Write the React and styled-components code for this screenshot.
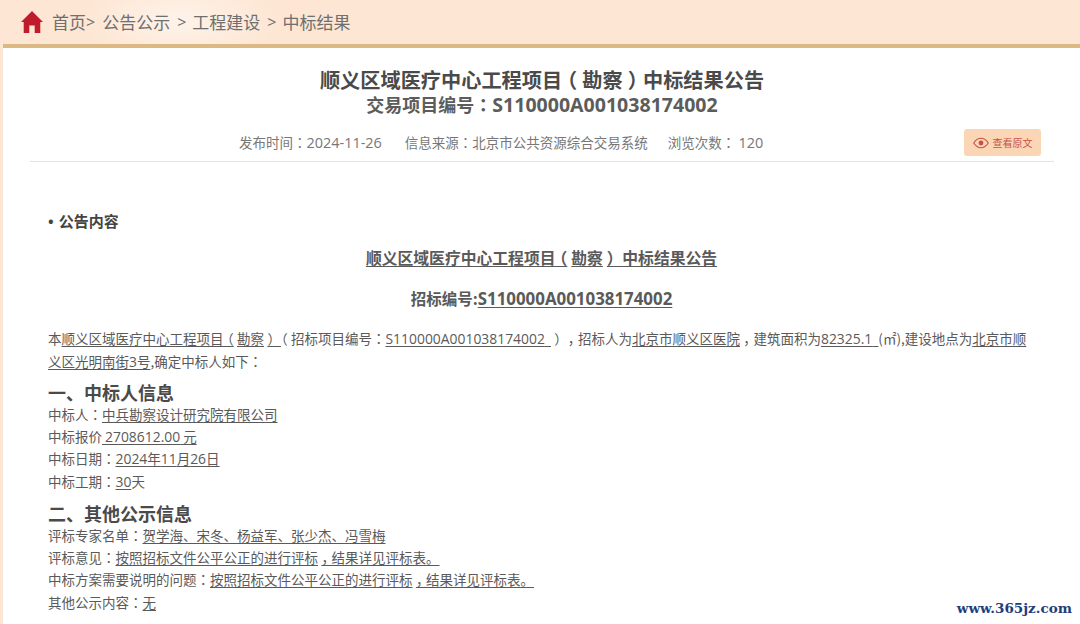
import React from 'react';
import styled, { createGlobalStyle } from 'styled-components';

const Global = createGlobalStyle`
  html, body { margin: 0; padding: 0; background: #fff; overflow: hidden; }
  body {
    font-family: "Noto Sans CJK SC", "Open Sans", sans-serif;
    color: #555;
    text-spacing-trim: space-all;
  }
`;
const Page = styled.div`
  position: relative;
  width: 1080px;
  height: 624px;
  overflow: hidden;
  background: #fde6d3;
`;
const Crumbs = styled.div`
  height: 43px;
  padding-bottom: 1px;
  display: flex;
  align-items: center;
  padding-left: 21px;
  font-size: 17px;
  color: #6f6f6f;
  white-space: pre;
  background: radial-gradient(ellipse 100px 44px at 180px 20px, #fef3ea 0%, #fde6d3 100%);
`;
const HomeWrap = styled.span`
  display: flex;
  margin: 1px 9px 0 0;
`;
const Crumb = styled.span`
  margin-right: ${p => p.$gap || 0}px;
`;
const Sep = styled.span`
  font-family: "Open Sans", sans-serif;
  font-size: 16px;
  margin-right: ${p => p.$gap || 0}px;
`;
const Sheet = styled.div`
  margin-left: 3px;
  height: 576px;
  background: #fff;
  border-top: 4px solid #dcb883;
`;
const Article = styled.div`
  padding: 0 26px 0 27px;
`;
const TitleBlock = styled.div`
  padding-top: 18px;
  text-align: center;
  --lat: 1.087em;
`;
const Title = styled.h1`
  margin: 0;
  font-size: 20.2px;
  line-height: 27px;
  font-weight: 700;
  color: #4a4a4a;
`;
const Sub = styled.h2`
  margin: 0;
  font-size: 18px;
  line-height: 22px;
  font-weight: 700;
  color: #5c5c5c;
`;
const Meta = styled.div`
  position: relative;
  height: 47px;
  border-bottom: 1px solid #e2e2e2;
  display: flex;
  align-items: flex-start;
  padding: 17px 0 0 209px;
  box-sizing: border-box;
  font-size: 13.5px;
  line-height: 20px;
  color: #777;
  white-space: pre;
  --lat: 1.07em;
`;
const MetaItem = styled.span`
  margin-right: ${p => p.$gap}px;
`;
const Source = styled.button`
  position: absolute;
  right: 13px;
  top: 14px;
  width: 77px;
  height: 27px;
  border: 0;
  padding: 0;
  border-radius: 3px;
  background: #fbd6b5;
  color: #c9504a;
  font: 10px "Noto Sans CJK SC", sans-serif;
  display: flex;
  align-items: center;
  justify-content: center;
  gap: 4px;
`;
const Content = styled.div`
  padding: 48px 0 0 18px;
  width: 982px;
  font-size: 13.5px;
  color: #5a5a5a;
  --lat: 1.03em;
`;
const Section = styled.div`
  font-size: 15px;
  font-weight: 700;
  line-height: 22px;
  color: #444;
  height: 22px;
`;
const Dot = styled.span`
  font-family: "Open Sans", sans-serif;
  margin-right: 5px;
`;
const Center = styled.div`
  text-align: center;
  font-weight: 700;
  font-size: ${p => p.$size}px;
  line-height: 24px;
  margin-top: ${p => p.$top}px;
  color: #5a5a5a;
  padding-left: 5px;
  --lat: 1.09em;
`;
const U = styled.span`
  text-decoration: underline;
  text-underline-offset: 2px;
`;
const Para = styled.p`
  margin: 17px 0 0;
  line-height: 23px;
`;
const Heading = styled.h3`
  margin: ${p => p.$top}px 0 0;
  font-size: 18px;
  line-height: 22px;
  font-weight: 700;
  color: #4a4a4a;
`;
const Line = styled.div`
  line-height: 22.4px;
`;
const Lat = styled.span`
  font-family: "Open Sans", sans-serif;
  font-size: var(--lat, 1.04em);
  line-height: 0;
`;
const Pun = styled.span`
  font-family: ${p => (p.$tc ? '"Noto Sans CJK TC", sans-serif' : 'inherit')};
  line-height: 0;
  position: relative;
  left: ${p => p.$shift || 0}em;
`;
const Mark = styled.div`
  position: absolute;
  right: 8px;
  bottom: 8px;
  font: bold 13.5px "DejaVu Serif", serif;
  color: #1d3f7c;
`;

const t = s =>
  s.split(/([A-Za-z0-9.\-]+|[（），：])/).filter(Boolean).map((part, i) => {
    if (/^[A-Za-z0-9.\-]+$/.test(part)) return <Lat key={i}>{part}</Lat>;
    if (part === '（') return <Pun key={i} $shift={-0.25}>{part}</Pun>;
    if (part === '）') return <Pun key={i} $shift={0.25}>{part}</Pun>;
    if (part === '，') return <Pun key={i} $shift={0.25}>{part}</Pun>;
    if (part === '：') return <Pun key={i} $tc>{part}</Pun>;
    return part;
  });

const Home = () => (
  <svg width="22" height="22" viewBox="0 0 22 22" fill="#bf1b2c">
    <path d="M11 0 L22 11 L19.300 11 L19.300 22 L13.700 22 L13.700 14.500 L8.300 14.500 L8.300 22 L2.700 22 L2.700 11 L0 11 Z" />
  </svg>
);
const Eye = () => (
  <svg width="16" height="12" viewBox="0 0 17 12" fill="none" stroke="#c9504a" strokeWidth="1.200">
    <path d="M.8 6C3 2.500 5.500 1 8.500 1s5.500 1.500 7.700 5c-2.200 3.500-4.700 5-7.700 5S3 9.500.8 6Z" />
    <circle cx="8.500" cy="6" r="2.600" fill="#c9504a" stroke="none" />
  </svg>
);

export default function App() {
  return (
    <Page>
      <Global />
      <Crumbs>
        <HomeWrap><Home /></HomeWrap>
        <Crumb>首页</Crumb><Sep $gap={7}>&gt;</Sep>
        <Crumb $gap={7}>公告公示</Crumb><Sep $gap={6}>&gt;</Sep>
        <Crumb $gap={7}>工程建设</Crumb><Sep $gap={6}>&gt;</Sep>
        <Crumb>中标结果</Crumb>
      </Crumbs>
      <Sheet>
        <Article>
          <TitleBlock>
            <Title>{t('顺义区域医疗中心工程项目（勘察）中标结果公告')}</Title>
            <Sub>{t('交易项目编号：S110000A001038174002')}</Sub>
          </TitleBlock>
          <Meta>
            <MetaItem $gap={23}>{t('发布时间：2024-11-26')}</MetaItem>
            <MetaItem $gap={20}>{t('信息来源：北京市公共资源综合交易系统')}</MetaItem>
            <MetaItem $gap={0}>{t('浏览次数： 120')}</MetaItem>
            <Source><Eye />查看原文</Source>
          </Meta>
          <Content>
            <Section><Dot>•</Dot>公告内容</Section>
            <Center $size={15.8} $top={14}><U>{t('顺义区域医疗中心工程项目（勘察） 中标结果公告')}</U></Center>
            <Center $size={15.5} $top={16}>{t('招标编号:')}<U>{t('S110000A001038174002')}</U></Center>
            <Para>
              本<U>{t('顺义区域医疗中心工程项目（勘察）')}</U>{t('（招标项目编号：')}<U>{t('S110000A001038174002')}{'\u00a0\u00a0'}</U>{t('），招标人为')}<U>北京市顺义区医院</U>{t('，建筑面积为')}<U>{t('82325.1')}{'\u00a0\u00a0'}</U>{t('(㎡),建设地点为')}<U>{t('北京市顺义区光明南街3号')}</U>{t(',确定中标人如下：')}
            </Para>
            <Heading $top={7.5}>一、中标人信息</Heading>
            <Line>{t('中标人：')}<U>中兵勘察设计研究院有限公司</U></Line>
            <Line>中标报价<U>{t(' 2708612.00 元')}</U></Line>
            <Line>{t('中标日期：')}<U>{t('2024年11月26日')}</U></Line>
            <Line>{t('中标工期：')}<U>{t('30')}</U>天</Line>
            <Heading $top={9.4}>二、其他公示信息</Heading>
            <Line>{t('评标专家名单：')}<U>贺学海、宋冬、杨益军、张少杰、冯雪梅</U></Line>
            <Line>{t('评标意见：')}<U>{t('按照招标文件公平公正的进行评标，结果详见评标表。')}</U></Line>
            <Line>{t('中标方案需要说明的问题：')}<U>{t('按照招标文件公平公正的进行评标，结果详见评标表。')}</U></Line>
            <Line>{t('其他公示内容：')}<U>无</U></Line>
          </Content>
        </Article>
      </Sheet>
      <Mark>www.365jz.com</Mark>
    </Page>
  );
}
